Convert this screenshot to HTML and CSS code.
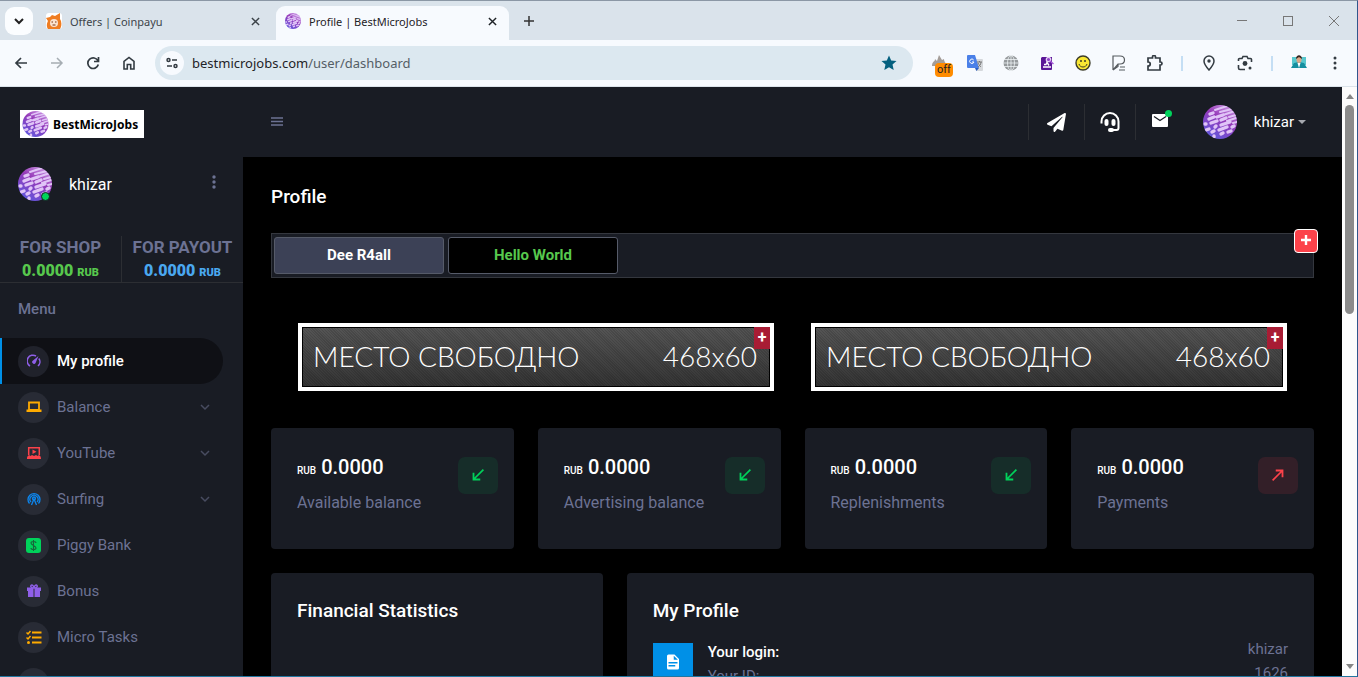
FILE: index.html
```html
<!DOCTYPE html>
<html lang="en">
<head>
    <meta charset="UTF-8">
    <meta name="viewport" content="width=device-width, initial-scale=1.0">
    <title>Profile | BestMicroJobs</title>
    <link rel="stylesheet" href="styles.css">
</head>
<body>
    <svg class="defs" aria-hidden="true">
        <defs>
            <linearGradient id="ball" x1="0.8" y1="0" x2="0.2" y2="1">
                <stop offset="0" stop-color="#cf9be6"/>
                <stop offset="0.4" stop-color="#9539b8"/>
                <stop offset="1" stop-color="#5d5ae0"/>
            </linearGradient>
            <clipPath id="round"><circle cx="17" cy="17" r="17"/></clipPath>
        </defs>
        <symbol id="avatar" viewBox="0 0 34 34">
            <circle cx="17" cy="17" r="17" fill="url(#ball)"/>
            <g clip-path="url(#round)" stroke="#e0c4f7" stroke-linecap="round" fill="none">
                <path stroke-width="2" d="M12 5l12-4M17 7l12-3M20 10l12-4M26 12l7-2M24 16l9-3M30 18l4-1"/>
                <path stroke-width="3.400" d="M7 9l3-1M6 14l5-2M14 12l6-2M2 19l1 0M8 18l6-2M18 15l5-2M3 25l3-1M12 22l1-1M18 20l9-3M9 27l2-1M16 25l8-3M29 22l2-1M11 32l0-1M18 29l2-1M25 27l3-1"/>
            </g>
        </symbol>
        <symbol id="chevron" viewBox="0 0 10 10"><path d="M1 3l4 4 4-4" fill="none" stroke="currentColor" stroke-width="1.5"/></symbol>
        <symbol id="close" viewBox="0 0 10 10"><path d="M1 1l8 8M9 1l-8 8" fill="none" stroke="currentColor" stroke-width="1.6"/></symbol>
        <symbol id="arrow-in" viewBox="0 0 24 24"><path d="M20 5.600L18.400 4 7.200 15.200V9H4.800v10.200H15v-2.400H8.800z" fill="currentColor"/></symbol>
        <symbol id="arrow-out" viewBox="0 0 24 24"><path d="M4 18.400L5.600 20 16.800 8.800V15h2.400V4.800H9v2.400h6.200z" fill="currentColor"/></symbol>
    </svg>

    <div class="browser">
        <div class="tabstrip">
            <button class="tab-search" aria-label="Search tabs"><svg width="10" height="10" viewBox="0 0 10 10"><path d="M1 3l4 4 4-4" fill="none" stroke="#222" stroke-width="2"/></svg></button>
            <div class="tab">
                <svg width="16" height="16" viewBox="0 0 16 16"><rect width="16" height="16" rx="3" fill="#fff"/><path d="M0 5l4-1 2-2 3 1 5-3v6l1 2c1 4 0 6-1 8H2c-2-3-1-6 0-8z" fill="#ef7d22"/><circle cx="8" cy="10" r="4" fill="#fbe3cf"/><path d="M5.500 9h1.500M9 9h1.500M6.500 12h3" stroke="#7b3510"/></svg>
                <span>Offers | Coinpayu</span>
                <button aria-label="Close tab"><svg width="9" height="9"><use href="#close"/></svg></button>
            </div>
            <div class="tab active">
                <svg width="16" height="16"><use href="#avatar"/></svg>
                <span>Profile | BestMicroJobs</span>
                <button aria-label="Close tab"><svg width="9" height="9"><use href="#close"/></svg></button>
            </div>
            <button class="new-tab" aria-label="New tab"><svg width="12" height="12" viewBox="0 0 12 12"><path d="M6 1v10M1 6h10" stroke="#333" stroke-width="1.500"/></svg></button>
            <div class="window-buttons">
                <button aria-label="Minimize"><svg width="10" height="10"><path d="M0 4.500h10" stroke="#777"/></svg></button>
                <button aria-label="Maximize"><svg width="10" height="10"><rect x="0.500" y="0.500" width="9" height="9" fill="none" stroke="#777"/></svg></button>
                <button aria-label="Close"><svg width="10" height="10"><path d="M0 0l10 10M10 0L0 10" stroke="#777"/></svg></button>
            </div>
        </div>

        <div class="toolbar">
            <div class="nav-buttons">
                <button aria-label="Back"><svg width="14" height="14" viewBox="0 0 14 14"><path d="M13 7H2M7 2L2 7l5 5" fill="none" stroke="#333b42" stroke-width="1.700"/></svg></button>
                <button aria-label="Forward"><svg width="14" height="14" viewBox="0 0 14 14"><path d="M1 7h11M7 2l5 5-5 5" fill="none" stroke="#a6adb3" stroke-width="1.500"/></svg></button>
                <button aria-label="Reload"><svg width="14" height="14" viewBox="0 0 14 14"><path d="M12 5A5.300 5.300 0 1 0 12.300 8.500M12.500 1v4.500H8" fill="none" stroke="#333b42" stroke-width="1.700"/></svg></button>
                <button aria-label="Home"><svg width="14" height="14" viewBox="0 0 14 14"><path d="M2 13V5.500L7 1.500l5 4V13H8.700V8.500H5.300V13z" fill="none" stroke="#333b42" stroke-width="1.600"/></svg></button>
            </div>
            <div class="address">
                <button class="site-info" aria-label="Site information"><svg width="12" height="12" viewBox="0 0 12 12"><g fill="none" stroke="#333b42" stroke-width="1.500"><circle cx="2.500" cy="3" r="1.500"/><path d="M6 3h5M1 9h5"/><circle cx="9.500" cy="9" r="1.500"/></g></svg></button>
                <a class="url" href="#">bestmicrojobs.com<span>/user/dashboard</span></a>
                <button aria-label="Bookmark"><svg width="16" height="16" viewBox="0 0 16 16"><path d="M8 0.500l2.200 5 5.300.5-4 3.600 1.200 5.400L8 12.200 3.300 15l1.200-5.400-4-3.600 5.300-.5z" fill="#04607f"/></svg></button>
            </div>
            <div class="extensions">
                <button class="ext-off" aria-label="Ad skipper"><svg width="16" height="16" viewBox="0 0 16 16"><path d="M1 11c0-5 3-4 3-7l2 2 2-6 3 5 2-1c0 3 2 3 2 7z" fill="#a49d98"/></svg><span>off</span></button>
                <button aria-label="Translate"><svg width="16" height="16" viewBox="0 0 16 16"><path d="M6 4h9a1 1 0 0 1 1 1v10a1 1 0 0 1-1 1H9z" fill="#d5d8dc"/><path d="M0 1a1 1 0 0 1 1-1h7l4 13H1a1 1 0 0 1-1-1z" fill="#4a80e8"/><path d="M8 13h4l-2.500 3z" fill="#2a5dc0"/><path d="M6.700 5A2.200 2.200 0 1 0 7 7H5" stroke="#fff" fill="none"/><path d="M10 7h5M12.500 6v1M14 7c0 3-2 4-3 5M11 8c1 2 2 3 3 4" stroke="#777" fill="none"/></svg></button>
                <button aria-label="Proxy"><svg width="16" height="16" viewBox="0 0 16 16"><circle cx="8" cy="8" r="7.500" fill="#969a9d"/><g stroke="#eef2f5" stroke-width="0.800" fill="none"><ellipse cx="8" cy="8" rx="3.500" ry="7.500"/><path d="M8 0v16M0 8h16M1 4.500h14M1 11.500h14"/></g></svg></button>
                <button aria-label="Job finder"><svg width="16" height="16" viewBox="0 0 16 16"><path d="M3 2h10v12a1 1 0 0 1-1 1H3a1 1 0 0 1-1-1V3z" fill="#5a1696"/><circle cx="9.500" cy="4.500" r="2.200" fill="#8f3fc8" stroke="#e6d0f5" stroke-width="1.300"/><path d="M11 6l3.500 3" stroke="#a65bd6" stroke-width="1.500"/><path d="M4 12h8M5 9.500l2 0 1-2 2 3" stroke="#fff" stroke-width="1.400" fill="none"/></svg></button>
                <button aria-label="Smiley"><svg width="16" height="16" viewBox="0 0 16 16"><circle cx="8" cy="8" r="7" fill="#f9e733" stroke="#3b3b28" stroke-width="1.400"/><path d="M4 9c1 4 7 4 8 0" fill="none" stroke="#3b3b28"/><circle cx="6" cy="6" r="1" fill="#3b3b28"/><circle cx="10" cy="6" r="1" fill="#3b3b28"/></svg></button>
                <button aria-label="Reader"><svg width="16" height="16" viewBox="0 0 16 16"><path d="M2 15V1h7c6 0 6 8 0 8H7L2 15l5-3.500V9M9 12h5M8 15h6" fill="none" stroke="#555a5e" stroke-width="1.200"/></svg></button>
                <button aria-label="Extensions"><svg width="16" height="16" viewBox="0 0 16 16"><path d="M1 3h4.500V2a1.500 1.500 0 0 1 3 0v1H13v4h.5a1.500 1.500 0 0 1 0 3H13v5H1v-4c3 0 3-4 0-4z" fill="none" stroke="#333b42" stroke-width="1.700"/></svg></button>
                <i class="divider"></i>
                <button aria-label="Location"><svg width="16" height="16" viewBox="0 0 16 16"><path d="M8 15C4.500 11 3 8.500 3 6a5 5 0 0 1 10 0c0 2.500-1.500 5-5 9z" fill="none" stroke="#333b42" stroke-width="1.500"/><circle cx="8" cy="6" r="1.700" fill="#333b42"/></svg></button>
                <button aria-label="Lens"><svg width="16" height="16" viewBox="0 0 16 16"><path d="M1.500 6V4.500a1 1 0 0 1 1-1H5l1-2h4l1 2h2.500a1 1 0 0 1 1 1V7M1.500 10v3a1.500 1.500 0 0 0 1.500 1.500h5" fill="none" stroke="#333b42" stroke-width="1.600"/><circle cx="8" cy="8.500" r="2.400" fill="#333b42"/><circle cx="13" cy="13" r="1.500" fill="#333b42"/></svg></button>
                <i class="divider"></i>
                <button aria-label="Account"><svg width="16" height="16" viewBox="0 0 16 16"><path d="M1 2h14v8H1z" fill="#58c7cd"/><path d="M0 13l3-5 5-1 5 1 3 5z" fill="#168fa0"/><path d="M6.500 8h3L8 13z" fill="#fff"/><ellipse cx="8" cy="4.500" rx="2.500" ry="3.500" fill="#dba788"/><path d="M5 4c0-5 6-5 6 0L8 2z" fill="#33241f"/></svg></button>
                <button aria-label="Browser menu"><svg width="16" height="16" viewBox="0 0 16 16"><g fill="#333b42"><circle cx="8" cy="3" r="1.500"/><circle cx="8" cy="8" r="1.500"/><circle cx="8" cy="13" r="1.500"/></g></svg></button>
            </div>
        </div>

        <div class="viewport">
            <aside class="sidebar">
                <a class="logo" href="#"><svg width="29" height="26"><use href="#avatar"/></svg><span>BestMicroJobs</span></a>
                <div class="user">
                    <div class="user-pic"><svg width="34" height="34"><use href="#avatar"/></svg><i></i></div>
                    <span>khizar</span>
                    <button aria-label="User menu"><svg width="6" height="20" viewBox="0 0 6 20"><g fill="#6c7293"><circle cx="3" cy="3" r="1.700"/><circle cx="3" cy="8" r="1.700"/><circle cx="3" cy="13" r="1.700"/></g></svg></button>
                </div>
                <div class="balances">
                    <div class="shop">FOR SHOP<b>0.0000 <small>RUB</small></b></div>
                    <div class="payout">FOR PAYOUT<b>0.0000 <small>RUB</small></b></div>
                </div>
                <h2>Menu</h2>
                <nav class="menu">
                    <a class="active" href="#"><i><svg width="14" height="14" viewBox="0 0 14 14"><path d="M3 12A5.500 5.500 0 0 1 9 2M11.800 4.500A5.500 5.500 0 0 1 11 12" fill="none" stroke="#8f5fe8" stroke-width="1.500"/><path d="M11.500 2L8.800 8.500A1.800 1.800 0 1 1 6 6.500z" fill="#8f5fe8"/></svg></i>My profile</a>
                    <a href="#"><i><svg width="16" height="14" viewBox="0 0 16 14"><path d="M3 2.500h10V10H3z" fill="none" stroke="#ffab00" stroke-width="1.800"/><path d="M0.500 9.500h15V12h-15z" fill="#ffab00"/></svg></i>Balance<svg class="more" width="10" height="10"><use href="#chevron"/></svg></a>
                    <a href="#"><i><svg width="14" height="14" viewBox="0 0 14 14"><path d="M1.700 9V1.700h10.600V9" fill="none" stroke="#fc424a" stroke-width="1.500"/><path d="M5.500 3.500l4 2.300-4 2.300zM0 13c0-3 1-3 2-4l1.500 1L5 9l2 1 2-1 1.500 1L12 9c1 1 2 1 2 4z" fill="#fc424a"/></svg></i>YouTube<svg class="more" width="10" height="10"><use href="#chevron"/></svg></a>
                    <a href="#"><i><svg width="14" height="14" viewBox="0 0 14 14"><g fill="none" stroke="#0d86ee" stroke-width="1.300"><path d="M2.500 11.500A6 6 0 1 1 11.500 11.500M4 10A4 4 0 1 1 10 10M4.500 13L7 7l2.500 6"/><circle cx="7" cy="6.500" r="1.500"/></g></svg></i>Surfing<svg class="more" width="10" height="10"><use href="#chevron"/></svg></a>
                    <a href="#"><i><svg width="15" height="15" viewBox="0 0 15 15"><rect width="15" height="15" rx="3" fill="#00d25b"/><path d="M10 5c0-2-5-2-5 0s5 3 5 5-5 2-5 0M7.500 2v11" fill="none" stroke="#17653b" stroke-width="1.100"/></svg></i>Piggy Bank</a>
                    <a href="#"><i><svg width="14" height="14" viewBox="0 0 14 14"><path d="M0 3.500h6.500v3.500H0zM7.500 3.500H14V7H7.500zM1 7h5.500v6H1zM7.500 7H13v6H7.500z" fill="#8f5fe8"/><path d="M7 4C5 4 3 3 4 1.500S7 2 7 4c0-2 2-4 3-2.500S9 4 7 4z" fill="none" stroke="#8f5fe8" stroke-width="1.500"/></svg></i>Bonus</a>
                    <a href="#"><i><svg width="16" height="14" viewBox="0 0 16 14"><path d="M6 2.500h9.500M6 7.500h9.500M6 12.500h9.500" stroke="#ffab00" stroke-width="2"/><path d="M0.500 2.500L2 4l2.500-3M0.500 7.500L2 9l2.500-3" fill="none" stroke="#ffab00" stroke-width="1.500"/><circle cx="2.500" cy="12.500" r="1.500" fill="#ffab00"/></svg></i>Micro Tasks</a>
                    <a href="#" aria-label="More"><i></i></a>
                </nav>
            </aside>

            <div class="page">
                <header class="topbar">
                    <button class="toggle" aria-label="Toggle sidebar"><svg width="12" height="10" viewBox="0 0 12 10"><path d="M0 1h12M0 4.500h12M0 8h12" stroke="#6c7293" stroke-width="1.600"/></svg></button>
                    <div class="top-links">
                        <a href="#" aria-label="Telegram"><svg width="19" height="19" viewBox="0 0 512 512"><path fill="#fff" d="M476 3L12 271c-18 10-16 35 2 43l106 45L409 104c5-5 13 2 8 8L175 407v80c0 24 28 33 42 16l64-77 125 52c14 6 30-3 33-18L511 28c3-20-17-34-35-25z"/></svg></a>
                        <a href="#" aria-label="Support"><svg width="20" height="20" viewBox="0 0 20 20"><path d="M1.500 11.500V9.500a8.500 8.500 0 0 1 17 0V16a2 2 0 0 1-2 2H11" fill="none" stroke="#fff" stroke-width="2"/><rect x="4.500" y="7" width="4" height="7" rx="2" fill="#fff"/><rect x="11.500" y="7" width="4" height="7" rx="2" fill="#fff"/><rect x="8" y="16" width="6" height="4" rx="2" fill="#fff"/></svg></a>
                        <a class="mail" href="#" aria-label="Messages"><svg width="16" height="13" viewBox="0 0 16 13"><rect width="16" height="13" rx="1" fill="#fff"/><path d="M2 2.500l6 4 6-4" fill="none" stroke="#191c24" stroke-width="1.300"/></svg><i></i></a>
                    </div>
                    <button class="account"><svg width="34" height="34"><use href="#avatar"/></svg><span>khizar</span><i></i></button>
                </header>

                <main>
                    <h1>Profile</h1>
                    <div class="link-bar">
                        <a class="blue" href="#">Dee R4all</a>
                        <a class="green" href="#">Hello World</a>
                        <button class="add" aria-label="Add link"><svg width="12" height="14" viewBox="0 0 12 14"><path d="M6 1v10M1 6h10" stroke="#fff" stroke-width="2.400"/></svg></button>
                    </div>
                    <div class="banners">
                        <a class="banner" href="#"><span>МЕСТО СВОБОДНО</span><span>468x60</span><i>+</i></a>
                        <a class="banner" href="#"><span>МЕСТО СВОБОДНО</span><span>468x60</span><i>+</i></a>
                    </div>
                    <div class="stats">
                        <div class="card"><div><h3><small>RUB</small> 0.0000</h3><p>Available balance</p></div><i class="in"><svg width="18" height="18"><use href="#arrow-in"/></svg></i></div>
                        <div class="card"><div><h3><small>RUB</small> 0.0000</h3><p>Advertising balance</p></div><i class="in"><svg width="18" height="18"><use href="#arrow-in"/></svg></i></div>
                        <div class="card"><div><h3><small>RUB</small> 0.0000</h3><p>Replenishments</p></div><i class="in"><svg width="18" height="18"><use href="#arrow-in"/></svg></i></div>
                        <div class="card"><div><h3><small>RUB</small> 0.0000</h3><p>Payments</p></div><i class="out"><svg width="18" height="18"><use href="#arrow-out"/></svg></i></div>
                    </div>
                    <div class="panels">
                        <section class="card finance"><h2>Financial Statistics</h2></section>
                        <section class="card profile">
                            <h2>My Profile</h2>
                            <div class="row">
                                <i><svg width="18" height="18" viewBox="0 0 24 24"><path fill="#fff" d="M13 9h5.500L13 3.500zM6 2h8l6 6v12a2 2 0 0 1-2 2H6a2 2 0 0 1-2-2V4a2 2 0 0 1 2-2m9 16v-2H6v2zm3-4v-2H6v2z"/></svg></i>
                                <div class="names"><b>Your login:</b><span>Your ID:</span></div>
                                <div class="values"><span>khizar</span><span>1626</span></div>
                            </div>
                        </section>
                    </div>
                </main>
            </div>

            <div class="scrollbar"><i class="up"></i><i class="thumb"></i><i class="down"></i></div>
        </div>
    </div>
</body>
</html>
```
FILE: styles.css
```css
* {
    box-sizing: border-box;
}
body {
    margin: 0;
    background: #000;
    font-family: Roboto, "Liberation Sans", sans-serif;
    font-size: 16px;
    color: #fff;
    overflow: hidden;
}
button {
    background: none;
    border: none;
    padding: 0;
    font: inherit;
    color: inherit;
    cursor: pointer;
}
a {
    color: inherit;
    text-decoration: none;
}
svg {
    display: block;
    flex: none;
}
h1, h2, h3, p {
    margin: 0;
}
.defs {
    position: absolute;
    width: 0;
    height: 0;
}
.browser {
    height: 100vh;
    display: flex;
    flex-direction: column;
    border-top: 1px solid #8b97a5;
    border-right: 1px solid #31568c;
    border-bottom: 1px solid #2277a0;
}

/* tabs */
.tabstrip {
    flex: none;
    height: 39px;
    display: flex;
    align-items: center;
    background: #dae3eb;
    font-family: "Noto Sans", sans-serif;
    font-size: 11px;
    color: #3c4349;
}
.tab-search {
    width: 28px;
    height: 28px;
    margin: 0 6px 0 5px;
    border-radius: 9px;
    background: #fbfdff;
    display: grid;
    place-items: center;
}
.tab {
    width: 237px;
    height: 34px;
    margin-top: 5px;
    padding: 0 16px 4px 7px;
    display: flex;
    align-items: center;
    gap: 8px;
}
.tab span {
    flex: 1;
}
.tab.active {
    width: 233px;
    background: #f7fafe;
    border-radius: 9px 9px 0 0;
    color: #1f2327;
    padding-left: 9px;
    padding-right: 12px;
}
.new-tab {
    margin-left: 14px;
}
.window-buttons {
    margin-left: auto;
    margin-right: 18px;
    display: flex;
    gap: 36px;
}

/* address row */
.toolbar {
    flex: none;
    height: 47px;
    padding: 0 14px;
    display: flex;
    align-items: center;
    background: #f7fafe;
    border-bottom: 1px solid #dbe3ea;
}
.nav-buttons {
    display: flex;
    gap: 22px;
    margin-right: 19px;
}
.address {
    flex: 1;
    height: 34px;
    padding: 0 16px 0 5px;
    display: flex;
    align-items: center;
    border-radius: 17px;
    background: #dce8f0;
}
.site-info {
    width: 24px;
    height: 24px;
    border-radius: 50%;
    background: #f7fafe;
    display: grid;
    place-items: center;
}
.url {
    flex: 1;
    margin-left: 8px;
    font-family: "Noto Sans", sans-serif;
    font-size: 13px;
    color: #1f2327;
}
.url span {
    color: #555e66;
}
.extensions {
    display: flex;
    align-items: center;
    gap: 20px;
    margin-left: 18px;
}
.ext-off {
    position: relative;
}
.ext-off span {
    position: absolute;
    left: 4px;
    top: 8px;
    padding: 0 2px;
    border-radius: 4px;
    background: #ff8c00;
    color: #222;
    font-size: 11px;
    line-height: 14px;
}
.divider {
    width: 2px;
    height: 15px;
    margin: 0 -2px;
    background: #c4def4;
}

.viewport {
    flex: 1;
    min-height: 0;
    display: flex;
    overflow: hidden;
}

/* sidebar */
.sidebar {
    flex: none;
    width: 243px;
    background: #191c24;
    color: #6c7293;
    overflow: hidden;
}
.logo {
    display: flex;
    align-items: center;
    gap: 3px;
    width: 124px;
    height: 28px;
    margin: 23px 0 0 20px;
    padding-left: 1px;
    background: #fff;
    color: #000;
    font: bold 12px "Noto Sans", sans-serif;
}
.user {
    display: flex;
    align-items: center;
    margin: 29px 26px 0 18px;
    color: #fff;
}
.user span {
    flex: 1;
    margin-left: 17px;
}
.user-pic {
    position: relative;
}
.user-pic i {
    position: absolute;
    right: 2px;
    bottom: 0;
    width: 9px;
    height: 9px;
    border: 1px solid #191c24;
    border-radius: 50%;
    background: #00d25b;
}
.balances {
    display: flex;
    margin-top: 35px;
    border-bottom: 1px solid #2c2e33;
    text-align: center;
    font-size: 17px;
    font-weight: 700;
    line-height: 23px;
}
.balances div {
    flex: 1;
}
.balances .shop {
    border-right: 1px solid #2c2e33;
}
.balances b {
    display: block;
    font-size: 16px;
}
.balances small {
    font-size: 11px;
    line-height: 11px;
}
.shop b {
    color: #57c84d;
}
.payout b {
    color: #4aa8f0;
}
.sidebar h2 {
    margin: 15px 18px 18px;
    font-size: 15px;
    line-height: 22px;
    font-weight: 500;
}
.menu a {
    display: flex;
    align-items: center;
    height: 46px;
    margin-right: 20px;
    padding-left: 18px;
    font-size: 15px;
}
.menu a.active {
    padding-left: 16px;
    border-left: 2px solid #0090e7;
    border-radius: 0 23px 23px 0;
    background: #0f1015;
    color: #fff;
    font-weight: 500;
}
.menu i {
    flex: none;
    width: 31px;
    height: 31px;
    margin-right: 8px;
    border-radius: 50%;
    background: #282b35;
    display: grid;
    place-items: center;
}
.menu .active i {
    background: #20222b;
}
.menu .more {
    margin-left: auto;
    margin-right: 13px;
    color: #484c60;
}

/* page */
.page {
    flex: 1;
    min-width: 0;
    overflow: hidden;
}
.topbar {
    display: flex;
    align-items: center;
    justify-content: space-between;
    height: 70px;
    padding: 0 36px 0 28px;
    background: #191c24;
}
.top-links {
    display: flex;
    margin-left: auto;
    margin-right: 26px;
}
.top-links a {
    width: 51px;
    height: 36px;
    border-left: 1px solid #2c2e33;
    display: grid;
    place-items: center;
}
.top-links a:first-child {
    width: 56px;
}
.top-links .mail {
    position: relative;
    width: 42px;
    padding: 0 0 4px 8px;
}
.mail i {
    position: absolute;
    right: 5px;
    top: 6px;
    width: 7px;
    height: 7px;
    border-radius: 50%;
    background: #00d25b;
}
.account {
    display: flex;
    align-items: center;
    gap: 17px;
    font-size: 15px;
}
.account i {
    margin-left: -13px;
    border: 4px solid transparent;
    border-top-color: #a7a9b0;
    border-bottom: 0;
}
main {
    padding: 28px;
}
h1, .card h2 {
    font-size: 19px;
    line-height: 24px;
    font-weight: 500;
}
.link-bar {
    position: relative;
    display: flex;
    gap: 4px;
    margin-top: 24px;
    padding: 3px 2px;
    border: 1px solid #34373e;
    background: #191c24;
}
.link-bar a {
    width: 170px;
    border: 1px solid #565b69;
    border-radius: 3px;
    text-align: center;
    font-size: 15px;
    line-height: 35px;
    font-weight: 700;
}
.link-bar .blue {
    background: #3c4156;
}
.link-bar .green {
    background: #000;
    color: #57c84d;
}
.add {
    position: absolute;
    right: -5px;
    top: -5px;
    width: 24px;
    height: 24px;
    border: 1px solid #fff;
    border-radius: 4px;
    background: #fc424a;
    display: grid;
    place-items: center;
}
.banners {
    display: flex;
    justify-content: center;
    gap: 37px;
    margin: 45px 0 37px;
}
.banner {
    position: relative;
    width: 476px;
    height: 68px;
    padding: 0 13px 2px 11px;
    border: 4px solid #fff;
    outline: 1px solid #000;
    outline-offset: -5px;
    background: repeating-linear-gradient(45deg, rgba(0, 0, 0, 0.12) 0 1px, transparent 1px 2px), linear-gradient(#555, #343434);
    display: flex;
    justify-content: space-between;
    align-items: center;
    font-family: Lato, sans-serif;
    font-size: 28px;
    font-weight: 300;
}
.banner i {
    position: absolute;
    right: 0;
    top: 0;
    width: 16px;
    height: 22px;
    background: #a81c34;
    text-align: center;
    font: bold 16px/22px Roboto, sans-serif;
}
.card {
    border-radius: 4px;
    background: #191c24;
    padding: 26px;
}
.stats {
    display: grid;
    grid-template-columns: repeat(4, 1fr);
    gap: 24px;
}
.stats .card {
    display: flex;
    justify-content: space-between;
    min-height: 121px;
    padding-right: 16px;
}
.stats h3 {
    font-size: 20px;
    line-height: 26px;
    font-weight: 500;
}
.stats small {
    font-size: 10px;
    line-height: 10px;
}
.stats p {
    margin-top: 11px;
    color: #6c7293;
    font-size: 16px;
    line-height: 24px;
}
.stats i {
    width: 40px;
    height: 37px;
    margin-top: 3px;
    padding-bottom: 2px;
    border-radius: 7px;
    display: grid;
    place-items: center;
}
.stats .in {
    background: #162d29;
    color: #00d25b;
}
.stats .out {
    background: #331f28;
    color: #fc424a;
}
.panels {
    display: grid;
    grid-template-columns: repeat(12, 1fr);
    gap: 24px;
    margin-top: 24px;
}
.finance {
    grid-column: span 4;
}
.profile {
    grid-column: span 8;
    min-height: 200px;
}
.row {
    display: flex;
    margin-top: 20px;
    color: #6c7293;
    font-size: 15px;
    line-height: 24px;
}
.row i {
    width: 40px;
    height: 37px;
    background: #0090e7;
    display: grid;
    place-items: center;
}
.row span, .row b {
    display: block;
}
.row b {
    color: #fff;
    font-weight: 500;
}
.names {
    flex: 1;
    margin: -3px 0 0 15px;
}
.values {
    margin-top: -6px;
    text-align: right;
}

/* scrollbar */
.scrollbar {
    flex: none;
    width: 15px;
    padding: 7px 0;
    background: #fcfcfc;
    display: flex;
    flex-direction: column;
    align-items: center;
}
.scrollbar .up {
    border: 4px solid transparent;
    border-bottom: 5px solid #858585;
    border-top: 0;
}
.thumb {
    width: 9px;
    height: 209px;
    margin-top: 6px;
    border-radius: 5px;
    background: #8b8b8b;
}
.scrollbar .down {
    margin-top: auto;
    border: 4px solid transparent;
    border-top: 5px solid #858585;
    border-bottom: 0;
}
```
